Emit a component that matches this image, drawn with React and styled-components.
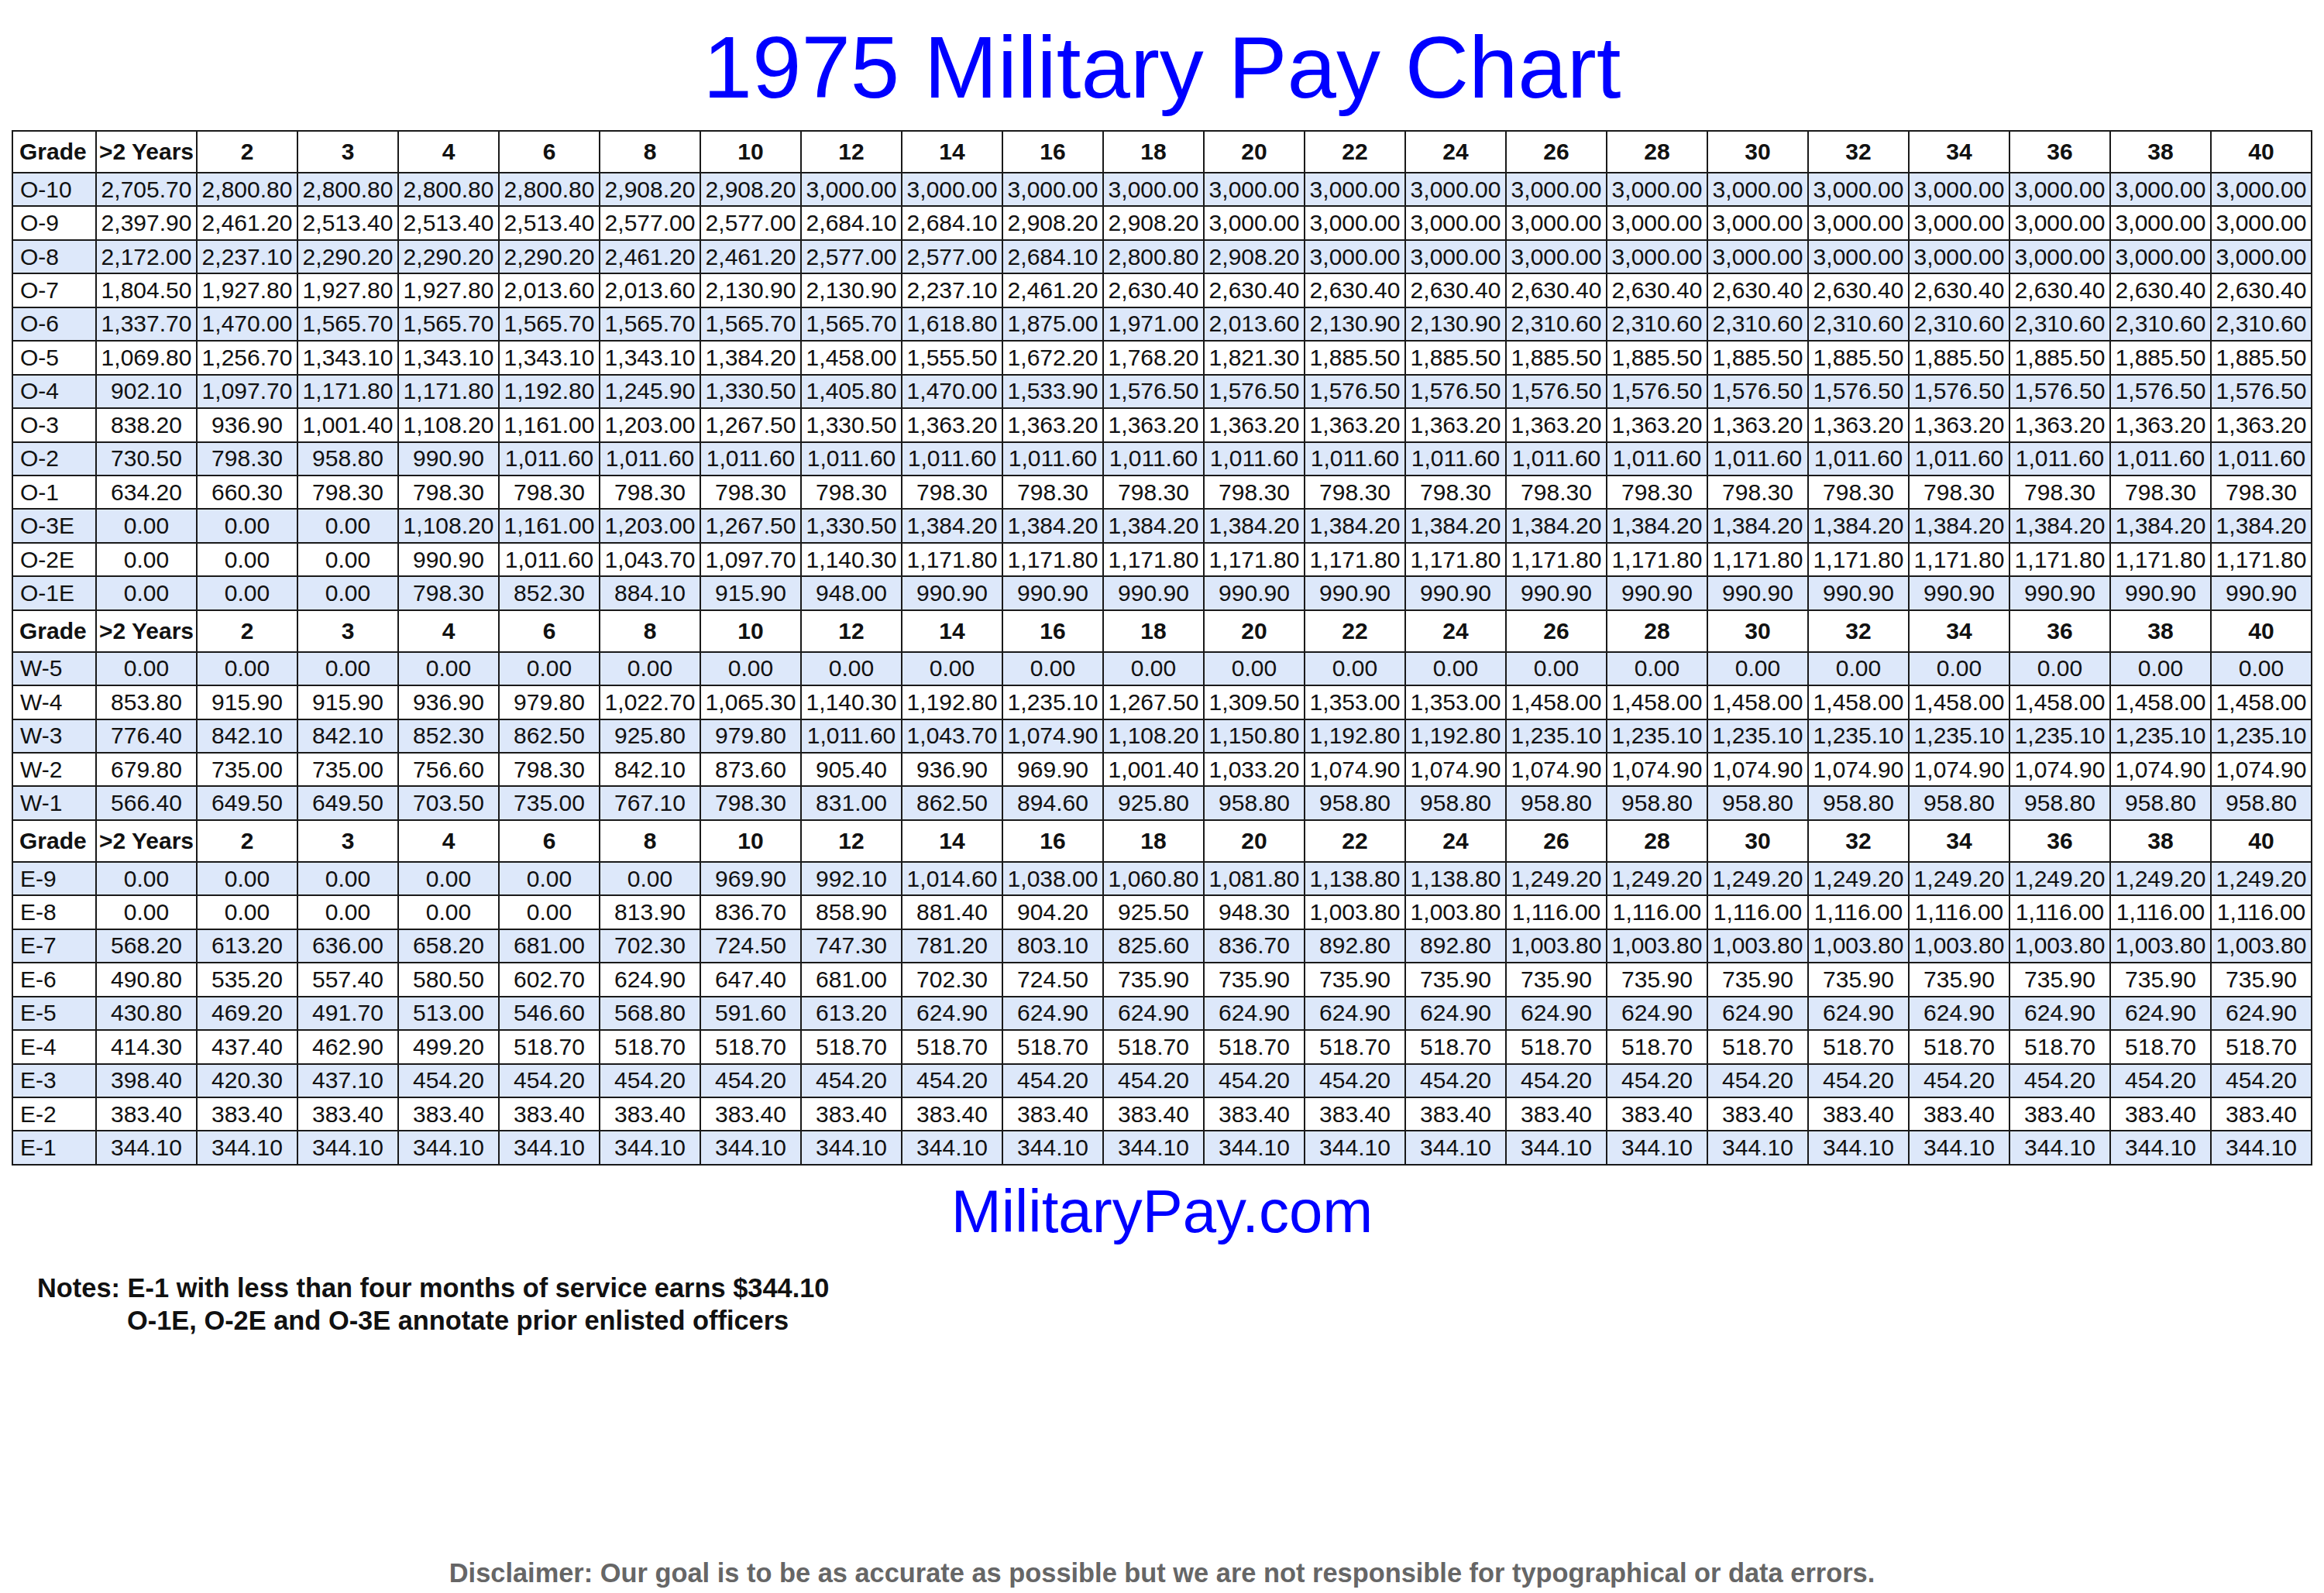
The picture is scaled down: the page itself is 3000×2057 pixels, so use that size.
import React from 'react';
import styled, { createGlobalStyle } from 'styled-components';

const YEARS = ['>2 Years', '2', '3', '4', '6', '8', '10', '12', '14', '16', '18', '20', '22', '24', '26', '28', '30', '32', '34', '36', '38', '40'];

const rep = (value, count) => Array(count).fill(value);

const SECTIONS = [
    [
        ['O-10', ['2,705.70', '2,800.80', '2,800.80', '2,800.80', '2,800.80', '2,908.20', '2,908.20', ...rep('3,000.00', 15)]],
        ['O-9', ['2,397.90', '2,461.20', '2,513.40', '2,513.40', '2,513.40', '2,577.00', '2,577.00', '2,684.10', '2,684.10', '2,908.20', '2,908.20', ...rep('3,000.00', 11)]],
        ['O-8', ['2,172.00', '2,237.10', '2,290.20', '2,290.20', '2,290.20', '2,461.20', '2,461.20', '2,577.00', '2,577.00', '2,684.10', '2,800.80', '2,908.20', ...rep('3,000.00', 10)]],
        ['O-7', ['1,804.50', '1,927.80', '1,927.80', '1,927.80', '2,013.60', '2,013.60', '2,130.90', '2,130.90', '2,237.10', '2,461.20', ...rep('2,630.40', 12)]],
        ['O-6', ['1,337.70', '1,470.00', ...rep('1,565.70', 6), '1,618.80', '1,875.00', '1,971.00', '2,013.60', '2,130.90', '2,130.90', ...rep('2,310.60', 8)]],
        ['O-5', ['1,069.80', '1,256.70', ...rep('1,343.10', 4), '1,384.20', '1,458.00', '1,555.50', '1,672.20', '1,768.20', '1,821.30', ...rep('1,885.50', 10)]],
        ['O-4', ['902.10', '1,097.70', '1,171.80', '1,171.80', '1,192.80', '1,245.90', '1,330.50', '1,405.80', '1,470.00', '1,533.90', ...rep('1,576.50', 12)]],
        ['O-3', ['838.20', '936.90', '1,001.40', '1,108.20', '1,161.00', '1,203.00', '1,267.50', '1,330.50', ...rep('1,363.20', 14)]],
        ['O-2', ['730.50', '798.30', '958.80', '990.90', ...rep('1,011.60', 18)]],
        ['O-1', ['634.20', '660.30', ...rep('798.30', 20)]],
        ['O-3E', [...rep('0.00', 3), '1,108.20', '1,161.00', '1,203.00', '1,267.50', '1,330.50', ...rep('1,384.20', 14)]],
        ['O-2E', [...rep('0.00', 3), '990.90', '1,011.60', '1,043.70', '1,097.70', '1,140.30', ...rep('1,171.80', 14)]],
        ['O-1E', [...rep('0.00', 3), '798.30', '852.30', '884.10', '915.90', '948.00', ...rep('990.90', 14)]],
    ],
    [
        ['W-5', rep('0.00', 22)],
        ['W-4', ['853.80', '915.90', '915.90', '936.90', '979.80', '1,022.70', '1,065.30', '1,140.30', '1,192.80', '1,235.10', '1,267.50', '1,309.50', '1,353.00', '1,353.00', ...rep('1,458.00', 8)]],
        ['W-3', ['776.40', '842.10', '842.10', '852.30', '862.50', '925.80', '979.80', '1,011.60', '1,043.70', '1,074.90', '1,108.20', '1,150.80', '1,192.80', '1,192.80', ...rep('1,235.10', 8)]],
        ['W-2', ['679.80', '735.00', '735.00', '756.60', '798.30', '842.10', '873.60', '905.40', '936.90', '969.90', '1,001.40', '1,033.20', ...rep('1,074.90', 10)]],
        ['W-1', ['566.40', '649.50', '649.50', '703.50', '735.00', '767.10', '798.30', '831.00', '862.50', '894.60', '925.80', ...rep('958.80', 11)]],
    ],
    [
        ['E-9', [...rep('0.00', 6), '969.90', '992.10', '1,014.60', '1,038.00', '1,060.80', '1,081.80', '1,138.80', '1,138.80', ...rep('1,249.20', 8)]],
        ['E-8', [...rep('0.00', 5), '813.90', '836.70', '858.90', '881.40', '904.20', '925.50', '948.30', '1,003.80', '1,003.80', ...rep('1,116.00', 8)]],
        ['E-7', ['568.20', '613.20', '636.00', '658.20', '681.00', '702.30', '724.50', '747.30', '781.20', '803.10', '825.60', '836.70', '892.80', '892.80', ...rep('1,003.80', 8)]],
        ['E-6', ['490.80', '535.20', '557.40', '580.50', '602.70', '624.90', '647.40', '681.00', '702.30', '724.50', ...rep('735.90', 12)]],
        ['E-5', ['430.80', '469.20', '491.70', '513.00', '546.60', '568.80', '591.60', '613.20', ...rep('624.90', 14)]],
        ['E-4', ['414.30', '437.40', '462.90', '499.20', ...rep('518.70', 18)]],
        ['E-3', ['398.40', '420.30', '437.10', ...rep('454.20', 19)]],
        ['E-2', rep('383.40', 22)],
        ['E-1', rep('344.10', 22)],
    ],
];

const GlobalStyle = createGlobalStyle`
    body {
        margin: 0;
        background: #ffffff;
        font-family: "Liberation Sans", Arial, sans-serif;
        color: #111111;
    }
`;

const Page = styled.div`
    display: flex;
    flex-direction: column;
    height: 2057px;
    padding-top: 22px;
    box-sizing: border-box;
`;

const Title = styled.h1`
    margin: 0;
    text-align: center;
    font-size: 114px;
    line-height: 130px;
    font-weight: normal;
    color: #0000ff;
`;

const PayTable = styled.table`
    margin: 16px auto 0;
    width: 2970px;
    table-layout: fixed;
    border-collapse: collapse;
    border: 2px solid #1a1a1a;
    font-size: 30px;
`;

const Col = styled.col`
    width: ${(p) => (p.$grade ? '108px' : '130px')};
`;

const HeadRow = styled.tr`
    height: 54px;
    background: #ffffff;
`;

const Row = styled.tr`
    height: 43.44px;
    background: ${(p) => (p.$shaded ? '#dde8fa' : '#ffffff')};
`;

const HeadCell = styled.th`
    border: 2px solid #1a1a1a;
    padding: 0;
    font-weight: bold;
    text-align: ${(p) => (p.$left ? 'left' : 'center')};
    padding-left: ${(p) => (p.$left ? '8px' : '0')};
    white-space: nowrap;
    overflow: visible;
    line-height: 1;
`;

const GradeCell = styled.td`
    border: 2px solid #1a1a1a;
    padding: 0 0 0 9px;
    text-align: left;
    line-height: 1;
    white-space: nowrap;
`;

const PayCell = styled.td`
    border: 2px solid #1a1a1a;
    padding: 0;
    text-align: center;
    line-height: 1;
    white-space: nowrap;
`;

const SiteName = styled.div`
    margin-top: 14px;
    text-align: center;
    font-size: 78px;
    line-height: 90px;
    color: #0000ff;
`;

const Notes = styled.div`
    margin-top: 33px;
    padding-left: 48px;
    font-size: 34.4px;
    line-height: 42px;
    font-weight: bold;
    color: #111111;
`;

const NoteLine = styled.div`
    padding-left: ${(p) => (p.$indent ? '116px' : '0')};
`;

const Disclaimer = styled.div`
    margin-top: auto;
    padding-bottom: 7px;
    text-align: center;
    font-size: 34.4px;
    line-height: 38px;
    font-weight: bold;
    color: #666666;
`;

function HeaderRow() {
    return (
        <HeadRow>
            <HeadCell $left>Grade</HeadCell>
            {YEARS.map((year) => (
                <HeadCell key={year}>{year}</HeadCell>
            ))}
        </HeadRow>
    );
}

export default function App() {
    return (
        <>
            <GlobalStyle />
            <Page>
                <Title>1975 Military Pay Chart</Title>
                <PayTable>
                    <colgroup>
                        <Col $grade />
                        {YEARS.map((year) => (
                            <Col key={year} />
                        ))}
                    </colgroup>
                    {SECTIONS.map((rows, s) => (
                        <tbody key={s}>
                            <HeaderRow />
                            {rows.map(([grade, pay], i) => (
                                <Row key={grade} $shaded={i % 2 === 0}>
                                    <GradeCell>{grade}</GradeCell>
                                    {pay.map((value, c) => (
                                        <PayCell key={c}>{value}</PayCell>
                                    ))}
                                </Row>
                            ))}
                        </tbody>
                    ))}
                </PayTable>
                <SiteName>MilitaryPay.com</SiteName>
                <Notes>
                    <NoteLine>Notes: E-1 with less than four months of service earns $344.10</NoteLine>
                    <NoteLine $indent>O-1E, O-2E and O-3E annotate prior enlisted officers</NoteLine>
                </Notes>
                <Disclaimer>
                    Disclaimer: Our goal is to be as accurate as possible but we are not responsible for typographical or data errors.
                </Disclaimer>
            </Page>
        </>
    );
}
